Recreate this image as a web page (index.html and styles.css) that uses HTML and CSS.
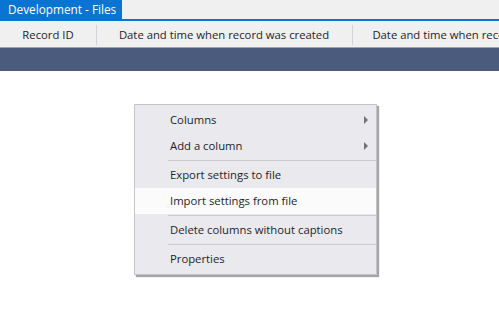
FILE: index.html
```html
<!DOCTYPE html>
<html lang="en">
<head>
  <meta charset="UTF-8">
  <title>Development - Files</title>
  <link rel="stylesheet" href="styles.css">
</head>
<body>
  <div class="tabs">
    <div class="tab active">Development - Files</div>
  </div>

  <div class="grid-header">
    <div class="col">Record ID</div>
    <div class="col wide">Date and time when record was created</div>
    <div class="col wide">Date and time when record was changed</div>
  </div>
  <div class="group-bar"></div>

  <div class="grid-body">
    <div class="context-menu">
      <div class="menu-item">Columns<span class="arrow"></span></div>
      <div class="menu-item">Add a column<span class="arrow"></span></div>
      <div class="menu-sep"></div>
      <div class="menu-item">Export settings to file</div>
      <div class="menu-item hover">Import settings from file</div>
      <div class="menu-sep"></div>
      <div class="menu-item">Delete columns without captions</div>
      <div class="menu-sep"></div>
      <div class="menu-item">Properties</div>
    </div>
  </div>
</body>
</html>
```

FILE: styles.css
```css
html, body {
  margin: 0;
  padding: 0;
  height: 100%;
}
body {
  font-family: "Segoe UI", "Open Sans", Arial, sans-serif;
  font-size: 11.3px;
  background-color: #fff;
  color: #1e1e2a;
  overflow: hidden;
}
.tabs {
  display: flex;
  height: 19px;
  background-color: #f0f0f0;
  border-bottom: 2px solid #0a74d2;
}
.tab {
  padding: 0 6px 0 8px;
  line-height: 19px;
  font-size: 11.8px;
  white-space: nowrap;
}
.tab.active {
  background-color: #0a74d2;
  color: #fff;
}
.grid-header {
  display: flex;
  height: 26px;
  background-color: #f0f0f0;
  border-bottom: 1px solid #a3a3a3;
  overflow: hidden;
  white-space: nowrap;
}
.col {
  flex: 0 0 96px;
  display: flex;
  align-items: center;
  justify-content: center;
  position: relative;
}
.col.wide {
  flex: 0 0 256px;
}
.col::after {
  content: "";
  position: absolute;
  right: -1px;
  top: 4px;
  bottom: 2px;
  width: 1px;
  background-color: #d3d3da;
}
.group-bar {
  height: 23px;
  background-color: #4b5b7e;
}
.grid-body {
  padding: 33px 0 0 134px;
}

/* Context menu */
.context-menu {
  width: 241px;
  padding: 2px 0;
  background-color: #e9e9ee;
  border: 1px solid #c3c3c9;
  box-shadow: 2px 2px 1px rgba(0, 0, 0, 0.35);
}
.menu-item {
  height: 26px;
  line-height: 26px;
  padding-left: 35px;
  position: relative;
  white-space: nowrap;
}
.menu-item.hover {
  background-color: #fbfbfb;
}
.arrow {
  position: absolute;
  right: 8px;
  top: 9px;
  width: 0;
  height: 0;
  border-top: 4px solid transparent;
  border-bottom: 4px solid transparent;
  border-left: 4px solid #727272;
}
.menu-sep {
  height: 1px;
  margin: 1px 0 1px 33px;
  background-color: #c9c9cf;
}
```
